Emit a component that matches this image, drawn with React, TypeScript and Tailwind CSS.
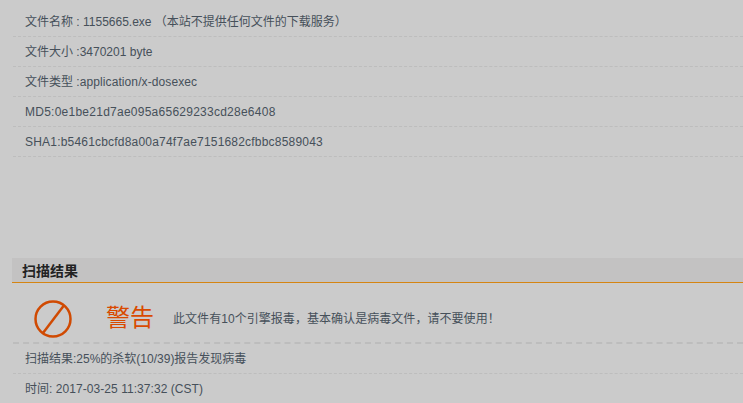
import React from 'react';

const font = { fontFamily: '"Liberation Sans", "Noto Sans CJK SC", sans-serif' };

const rowClass = 'h-[30px] leading-[31px] pl-[12px] border-b border-dashed border-[#bdbdbd]';

const App: React.FC = () => {
  return (
    <div style={font} className="w-[743px] h-[403px] overflow-hidden bg-[#cbcbcb] text-[12px] text-[#46505a]">
      <div className="ml-[13px] pt-[7px]">
        <div className={rowClass}>文件名称 : 1155665.exe （本站不提供任何文件的下载服务）</div>
        <div className={rowClass}>文件大小 :3470201 byte</div>
        <div className={rowClass}>
          文件类型 :<span className="tracking-[0.1px]">application/x-dosexec</span>
        </div>
        <div className={`${rowClass} tracking-[0.25px]`}>MD5:0e1be21d7ae095a65629233cd28e6408</div>
        <div className={`${rowClass} tracking-[0.2px]`}>SHA1:b5461cbcfd8a00a74f7ae7151682cfbbc8589043</div>
      </div>
      <div className="ml-[12px] mt-[101px] h-[25px] pl-[10px] bg-[#c3c2c2] border-b border-[#d58512] text-[14px] leading-[26px] font-bold text-[#222222]">
        扫描结果
      </div>
      <div className="ml-[13px] h-[61px] flex items-center border-b-2 border-dashed border-[#bdbdbd]">
        <svg className="ml-[21px] mt-[12px]" width="38" height="38" viewBox="0 0 38 38" fill="none" stroke="#d04a02" strokeWidth="2.5">
          <circle cx="19" cy="19" r="17.5" />
          <line x1="29.5" y1="6" x2="9" y2="33" />
        </svg>
        <span className="ml-[34px] mt-[11px] text-[24px] leading-[30px] text-[#d94a00]">警告</span>
        <span className="ml-[19px] mt-[12px] tracking-[0.05px] text-[#46505a]">此文件有10个引擎报毒，基本确认是病毒文件，请不要使用！</span>
      </div>
      <div className="ml-[13px]">
        <div className={rowClass}>扫描结果:25%的杀软(10/39)报告发现病毒</div>
        <div className="h-[30px] leading-[31px] pl-[12px] tracking-[0.05px]">时间: 2017-03-25 11:37:32 (CST)</div>
      </div>
    </div>
  );
};

export default App;
